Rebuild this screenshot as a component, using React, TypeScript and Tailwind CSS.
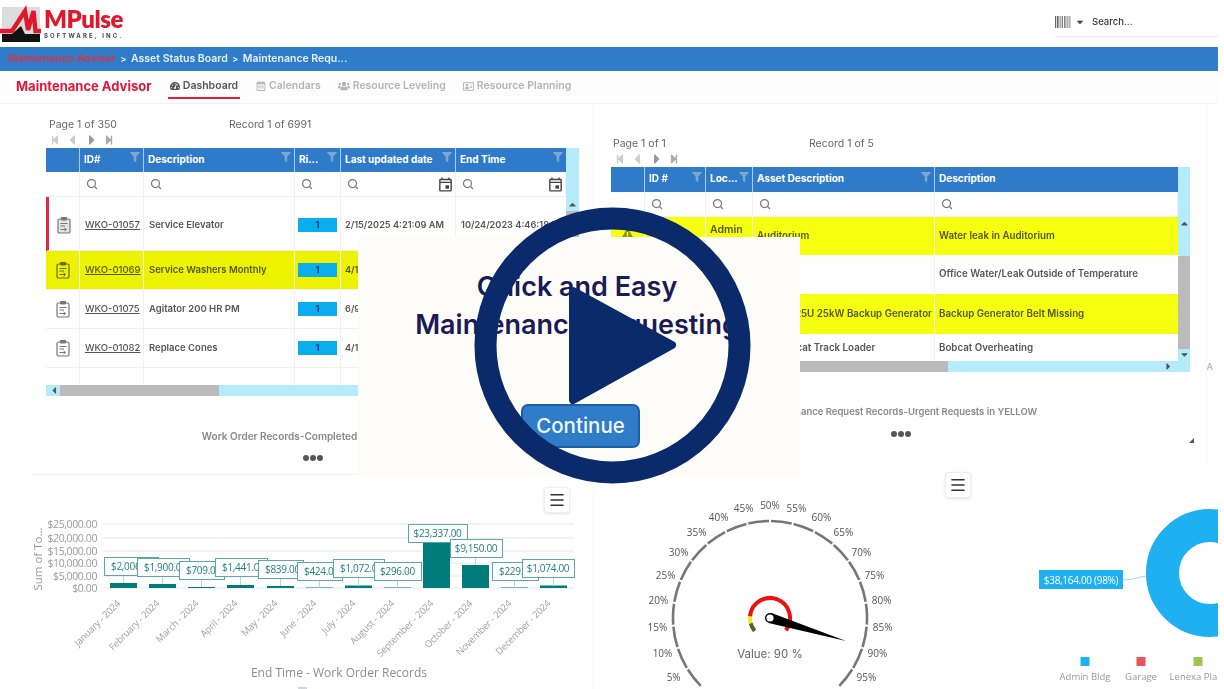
import React from "react";
import { Search, Menu } from "lucide-react";
import {
  FaFilter, FaStepBackward, FaStepForward, FaCaretLeft, FaCaretRight, FaCaretUp, FaCaretDown,
  FaTachometerAlt, FaRegCalendarAlt, FaUsers, FaRegAddressCard, FaExclamationTriangle,
} from "react-icons/fa";
import { MdOutlineEvent } from "react-icons/md";

const polar = (cx: number, cy: number, r: number, a: number) => {
  const t = (a * Math.PI) / 180;
  return [cx + r * Math.sin(t), cy - r * Math.cos(t)];
};
const arc = (cx: number, cy: number, r: number, a0: number, a1: number) => {
  const [x0, y0] = polar(cx, cy, r, a0);
  const [x1, y1] = polar(cx, cy, r, a1);
  return `M${x0} ${y0} A${r} ${r} 0 ${a1 - a0 > 180 ? 1 : 0} 1 ${x1} ${y1}`;
};

function Pager({ page, record, gap }: { page: string; record: string; gap: string }) {
  return (
    <>
      <div className={`flex h-[15px] items-center text-[10.5px] text-[#666] ${gap}`}>
        <span className="w-[180px]">{page}</span>
        <span>{record}</span>
      </div>
      <div className="flex h-[16px] items-center gap-[4px] pl-[4px] text-[10px] text-[#cccccc]">
        <FaStepBackward />
        <FaCaretLeft className="text-[16px]" />
        <FaCaretRight className="text-[16px] text-[#999]" />
        <FaStepForward className="text-[#aaa]" />
      </div>
    </>
  );
}

function Head({ label, filter = true }: { label: string; filter?: boolean }) {
  return (
    <div className="flex items-center justify-between border-r border-[#a9cff0] bg-[#2f7bc9] pl-[4px] pr-[3px] text-[10px] font-bold text-white last:border-r-0">
      <span className="pb-[2px] whitespace-nowrap">{label}</span>
      {filter && <FaFilter className="mb-[6px] shrink-0 text-[10px] text-[#7fa6cf]" />}
    </div>
  );
}

function FilterCell({ cal }: { cal?: boolean }) {
  return (
    <div className="flex items-center justify-between border-r border-b border-[#f1f1f1] pl-[6px] pr-[1px]">
      <Search size={12} strokeWidth={2.5} className="text-[#777]" />
      {cal && <MdOutlineEvent className="text-[17px] text-[#444]" />}
    </div>
  );
}

function ClipIcon({ hi, mark }: { hi?: boolean; mark?: boolean }) {
  const c = hi ? "#666a10" : "#777";
  return (
    <svg viewBox="0 0 14 18" className="h-[18px] w-[14px]">
      <rect x={1} y={3} width={12} height={14} rx={1.6} fill={mark ? "#e4e4e4" : "none"} stroke={c} strokeWidth={1.2} />
      <rect x={4} y={1} width={6} height={3.4} rx={0.8} fill={c} />
      <path d="M3.5 7.5H10.5M3.5 10H8M3.5 13.5H9M7.5 11.8L9.5 13.5L7.5 15.2" fill="none" stroke={c} strokeWidth={1} />
    </svg>
  );
}

type Row = { id: string; desc: string; date: string; end: string; hi?: boolean; mark?: boolean };
const leftRows: Row[] = [
  { id: "WKO-01057", desc: "Service Elevator", date: "2/15/2025 4:21:09 AM", end: "10/24/2023 4:46:18 PM", mark: true },
  { id: "WKO-01069", desc: "Service Washers Monthly", date: "4/1/2025 8:00:00 AM", end: "4/1/2025 8:00:00 AM", hi: true },
  { id: "WKO-01075", desc: "Agitator 200 HR PM", date: "6/9/2025 8:00:00 AM", end: "6/9/2025 8:00:00 AM" },
  { id: "WKO-01082", desc: "Replace Cones", date: "4/1/2025 8:00:00 AM", end: "4/1/2025 8:00:00 AM" },
];

function LeftTable() {
  const heights = ["h-[54px]", "h-[39px]", "h-[39px]", "h-[39px]"];
  return (
    <div className="w-[533px]">
      <div className="flex">
        <div className="w-[520px] overflow-hidden">
          <div className="grid h-[24px] grid-cols-[34px_64px_151px_46px_115px_110px]">
            <Head label="" filter={false} />
            <Head label="ID#" />
            <Head label="Description" />
            <Head label="Ri..." />
            <Head label="Last updated date" />
            <Head label="End Time" />
          </div>
          <div className="grid h-[25px] grid-cols-[34px_64px_151px_46px_115px_110px]">
            <div className="border-r border-b border-[#f1f1f1]" />
            <FilterCell />
            <FilterCell />
            <FilterCell />
            <FilterCell cal />
            <FilterCell cal />
          </div>
          {leftRows.map((r, i) => (
            <div
              key={r.id}
              className={`grid grid-cols-[34px_64px_151px_46px_115px_110px] text-[9.5px] font-semibold ${heights[i]} ${
                r.hi ? "bg-[#ecf200] text-[#55581a]" : "text-[#555]"
              }`}
            >
              <div className={`flex items-center justify-center border-r border-b border-[#f1f1f1] ${r.mark ? "border-l-[3px] border-l-[#e0283f] pt-[3px]" : ""}`}>
                <ClipIcon hi={r.hi} mark={r.mark} />
              </div>
              <div className={`flex items-center border-r border-b border-[#f1f1f1] pl-[5px] font-medium underline ${r.mark ? "pt-[3px]" : ""}`}>{r.id}</div>
              <div className={`flex items-center border-r border-b border-[#f1f1f1] pl-[5px] whitespace-nowrap ${r.mark ? "pt-[3px]" : ""}`}>{r.desc}</div>
              <div className={`flex items-center justify-center border-r border-b border-[#f1f1f1] ${r.mark ? "pt-[3px]" : ""}`}>
                <span className="flex h-[14px] w-[39px] items-center justify-center bg-[#0aaeef] text-[#12306a]">1</span>
              </div>
              <div className={`flex items-center border-r border-b border-[#f1f1f1] pl-[4px] text-[9.2px] whitespace-nowrap ${r.mark ? "pt-[3px]" : ""}`}>{r.date}</div>
              <div className={`flex items-center overflow-hidden border-b border-[#f1f1f1] pl-[5px] text-[9.2px] whitespace-nowrap ${r.mark ? "pt-[3px]" : ""}`}>{r.end}</div>
            </div>
          ))}
          <div className="grid h-[17px] grid-cols-[34px_64px_151px_46px_115px_110px]">
            <div className="border-r border-[#f1f1f1]" />
            <div className="border-r border-[#f1f1f1]" />
            <div className="border-r border-[#f1f1f1]" />
            <div className="border-r border-[#f1f1f1]" />
            <div className="border-r border-[#f1f1f1]" />
            <div />
          </div>
        </div>
        <div className="flex w-[13px] flex-col items-center bg-[#b5ecfb] pt-[51px] text-[#555]">
          <FaCaretUp className="text-[11px]" />
          <div className="mt-[1px] h-[150px] w-full bg-[#bbbbbb]" />
        </div>
      </div>
      <div className="flex h-[11px] items-center bg-[#b5ecfb]">
        <FaCaretLeft className="ml-[2px] w-[12px] text-[11px] text-[#555]" />
        <div className="h-full w-[159px] bg-[#bbbbbb]" />
      </div>
    </div>
  );
}

const RC = "grid-cols-[34px_61px_47px_182px_243px]";

function RightTable() {
  const rows = [
    { h: "h-[38px]", hi: true, id: "MRQ-00009", loc: "Admin", asset: "Auditorium", desc: "Water leak in Auditorium" },
    { h: "h-[39px]", hi: false, id: "MRQ-00011", loc: "Admin", asset: "", desc: "Office Water/Leak Outside of Temperature" },
    { h: "h-[40px]", hi: true, id: "MRQ-00014", loc: "Plant", asset: "Perkins 25U 25kW Backup Generator", desc: "Backup Generator Belt Missing" },
    { h: "h-[27px]", hi: false, id: "MRQ-00016", loc: "Yard", asset: "T65 Bobcat Track Loader", desc: "Bobcat Overheating" },
  ];
  return (
    <div className="w-[579px]">
      <div className="flex">
        <div className="w-[567px]">
          <div className={`grid h-[25px] ${RC}`}>
            <Head label="" filter={false} />
            <Head label="ID #" />
            <Head label="Loc..." />
            <Head label="Asset Description" />
            <Head label="Description" filter={false} />
          </div>
          <div className={`grid h-[25px] ${RC}`}>
            <div className="border-r border-b border-[#f1f1f1]" />
            <FilterCell />
            <FilterCell />
            <FilterCell />
            <FilterCell />
          </div>
          {rows.map((r, i) => (
            <div key={r.id} className={`grid ${RC} ${r.h} text-[9.75px] font-semibold ${r.hi ? "bg-[#f5ff0f] text-[#55581a]" : "text-[#555]"}`}>
              <div className="flex items-center justify-center border-r border-[#f1f1f1] pb-[5px]">
                {r.hi && <FaExclamationTriangle className="text-[11px] text-[#8f9220]" />}
              </div>
              <div className="flex items-center border-r border-[#f1f1f1] pl-[5px] font-medium underline">{r.id}</div>
              <div className={`flex border-r border-[#f1f1f1] pl-[4px] ${i === 0 ? "items-start pt-[5px] text-[10.5px]" : "items-center"}`}>{r.loc}</div>
              <div className="flex items-center overflow-hidden border-r border-[#f1f1f1] pl-[4px] whitespace-nowrap">{r.asset}</div>
              <div className="flex items-center pl-[4px] whitespace-nowrap">{r.desc}</div>
            </div>
          ))}
        </div>
        <div className="flex w-[12px] flex-col items-center bg-[#b5ecfb] pt-[51px] text-[#555]">
          <FaCaretUp className="text-[11px]" />
          <div className="mt-[27px] h-[93px] w-full bg-[#bbbbbb]" />
          <FaCaretDown className="text-[11px]" />
        </div>
      </div>
      <div className="flex h-[11px] items-center bg-[#b5ecfb]">
        <div className="h-full w-[337px] bg-[#bbbbbb]" />
        <FaCaretRight className="ml-auto mr-[16px] text-[11px] text-[#555]" />
      </div>
    </div>
  );
}

function Dots() {
  return (
    <div className="mt-[12px] flex h-[6px] justify-center gap-[1px]">
      <span className="h-[6px] w-[6px] rounded-full bg-[#555]" />
      <span className="h-[6px] w-[6px] rounded-full bg-[#555]" />
      <span className="h-[6px] w-[6px] rounded-full bg-[#555]" />
    </div>
  );
}

const MENU_CLASS =
  "absolute flex h-[26px] w-[26px] items-center justify-center rounded-[3px] border border-[#eeeeee] bg-white text-[#333] shadow-sm";

const bars: [number, number][] = [
  [110, 583], [149, 584], [188, 587], [227, 585], [267, 586], [306, 587.5],
  [345, 585.5], [384, 587.5], [423, 542], [462, 565], [501, 587.5], [540, 585.5],
];
const tags: [number, number, number, string][] = [
  [104, 54, 557, "$2,006.00"], [137, 52, 558, "$1,900.00"], [179, 45, 561, "$709.00"], [215, 52, 558, "$1,441.00"],
  [258, 45, 560, "$839.00"], [297, 45, 562, "$424.00"], [333, 51, 559, "$1,072.00"], [374, 47, 562, "$296.00"],
  [408, 59, 524, "$23,337.00"], [450, 52, 539, "$9,150.00"], [492, 46, 562, "$229.00"], [522, 52, 559, "$1,074.00"],
];
const months = ["January", "February", "March", "April", "May", "June", "July", "August", "September", "October", "November", "December"];
const yTicks: [string, number][] = [["$25,000.00", 524], ["$20,000.00", 538], ["$15,000.00", 551], ["$10,000.00", 563], ["$5,000.00", 576], ["$0.00", 588]];

function BarChart() {
  return (
    <svg viewBox="0 475 594 214" className="block h-[214px] w-[594px] font-['Open_Sans',sans-serif]">
      {yTicks.map(([l, y]) => (
        <g key={l}>
          <line x1={103} x2={574} y1={y} y2={y} stroke="#e6e6e6" />
          <text x={97} y={y + 4} textAnchor="end" fontSize={10.5} fill="#9a9a9a" letterSpacing={-0.4}>{l}</text>
        </g>
      ))}
      <text transform="translate(42 559) rotate(-90)" textAnchor="middle" fontSize={11.5} fill="#999">Sum of To...</text>
      {bars.map(([x, top], i) => (
        <g key={months[i]}>
          <rect x={x} y={top} width={27} height={588 - top} fill="#007c7a" />
          <line x1={x + 13.5} x2={x + 13.5} y1={tags[i][2] + 18} y2={top} stroke="#b8d8d6" />
          <text transform={`translate(${x + 11} 604) rotate(-45)`} textAnchor="end" fontSize={9.5} letterSpacing={-0.2} fill="#a0a0a0">{months[i]} - 2024</text>
        </g>
      ))}
      {tags.map(([x, w, y, t], i) => {
        const mid = i === 11 || i === 8 || i === 9 || i === 7;
        return (
          <g key={t}>
            <rect x={x + 0.5} y={y + 0.5} width={w} height={18} fill="#fff" stroke="#5aa9a7" strokeWidth={1} />
            <text x={x + (mid ? w / 2 : 7)} y={y + 13} textAnchor={mid ? "middle" : "start"} fontSize={10} fill="#1d7f80" letterSpacing={-0.3}>{t}</text>
          </g>
        );
      })}
      <text x={339} y={677} textAnchor="middle" fontSize={12} fill="#8c8c8c">End Time - Work Order Records</text>
      <rect x={298} y={687} width={9} height={2} fill="#cfd8dc" />
    </svg>
  );
}

function Gauge() {
  const cx = 770, cy = 618;
  const steps = Array.from({ length: 20 }, (_, i) => i);
  const labels = Array.from({ length: 19 }, (_, i) => (i + 1) * 5);
  const [tx, ty] = [846, 641];
  return (
    <svg viewBox="594 464 396 225" className="block h-[225px] w-[396px] font-['Open_Sans',sans-serif]">
      {steps.map((i) => (
        <path key={i} d={arc(cx, cy, 97, -135 + i * 13.5 + 0.6, -135 + (i + 1) * 13.5 - 0.6)} fill="none" stroke="#777" strokeWidth={2.6} />
      ))}
      {labels.map((p) => {
        const [x, y] = polar(cx, cy, 113, -135 + p * 2.7);
        return <text key={p} x={x} y={y + 4} textAnchor="middle" fontSize={10} fill="#555">{p}%</text>;
      })}
      <path d={arc(cx, cy, 20, -130, -105)} fill="none" stroke="#5a5f2a" strokeWidth={4} />
      <path d={arc(cx, cy, 20, -105, -85)} fill="none" stroke="#e8ec20" strokeWidth={4} />
      <path d={arc(cx, cy, 20, -85, 128)} fill="none" stroke="#ee1111" strokeWidth={4} />
      <polygon points={`${cx + 1.5} ${cy - 5} ${tx} ${ty} ${cx - 1.5} ${cy + 5}`} fill="#000" />
      <circle cx={cx} cy={cy} r={4.3} fill="#fff" stroke="#000" strokeWidth={1.4} />
      <text x={cx} y={658} textAnchor="middle" fontSize={11.5} fill="#666" className="font-['Inter',sans-serif]">Value: 90 %</text>
    </svg>
  );
}

function Donut() {
  return (
    <svg viewBox="990 464 228 225" className="block h-[225px] w-[228px] font-['Open_Sans',sans-serif]">
      <circle cx={1210} cy={573} r={47.5} fill="none" stroke="#1fb0f2" strokeWidth={33} />
      <path d="M1123 580 C1132 580 1138 577 1146 576" fill="none" stroke="#9adcf7" />
      <rect x={1039} y={570} width={84} height={19} fill="#1fb0f2" />
      <text x={1081} y={584} textAnchor="middle" fontSize={10} fill="#fff" letterSpacing={-0.3}>$38,164.00 (98%)</text>
      {[[1085, "#1fb0f2", "Admin Bldg"], [1141, "#e8555b", "Garage"], [1198, "#9cc653", "Lenexa Plant"]].map(([x, c, t]) => (
        <g key={t as string}>
          <rect x={(x as number) - 4.5} y={657} width={9} height={9} fill={c as string} />
          <text x={x as number} y={680} textAnchor="middle" fontSize={9.5} fill="#999">{t as string}</text>
        </g>
      ))}
    </svg>
  );
}

function Logo() {
  return (
    <svg viewBox="0 0 41 42" className="h-[42px] w-[41px] shrink-0">
      <rect x={2} y={6} width={38} height={35} fill="#dcdcdc" />
      <path d="M2 33 H12 L21 25 L25 33 H40 V41 H2 Z" fill="#111" />
      <path d="M0 30 H12 L25 10 L28 29 L33.5 10 L35.5 30 H41" fill="none" stroke="#e0182d" strokeWidth={4.4} strokeLinejoin="miter" />
    </svg>
  );
}

export default function App() {
  return (
    <div className="relative h-[689px] w-[1224px] overflow-hidden bg-white font-['Inter','Noto_Sans',sans-serif]">
      <div className="w-[1218px] blur-[0.4px]">
        <header className="flex h-[47px] items-start">
          <div className="flex items-start pt-[1px]">
            <Logo />
            <div className="ml-[3px] flex flex-col">
              <span className="mt-[4px] text-[24px] leading-[28px] font-extrabold tracking-[-0.5px] text-[#e0182d] font-['Lato',sans-serif]">MPulse</span>
              <span className="text-[6px] leading-[6px] font-bold tracking-[2.1px] whitespace-nowrap text-[#444]">SOFTWARE, INC.</span>
            </div>
          </div>
          <div className="ml-auto mt-[15px] w-[163px] border-b border-[#fbe3e5] pb-[7px]">
            <div className="flex h-[14px] items-center text-[#555]">
              <svg viewBox="0 0 16 12" className="h-[12px] w-[16px]">
                {[0, 2, 3.5, 5.5, 7, 9, 10.5, 12.5, 14.5].map((x) => (
                  <rect key={x} x={x} y={0} width={x % 2 === 0 ? 1.2 : 0.8} height={12} fill="#666" />
                ))}
              </svg>
              <FaCaretDown className="ml-[4px] text-[10px] text-[#444]" />
              <span className="ml-[7px] text-[9.5px] font-medium text-[#333]">Search...</span>
            </div>
          </div>
        </header>

        <nav className="flex h-[24px] items-center gap-[4.5px] bg-[#2f7cc8] pl-[8px] text-[10.5px] font-semibold text-[#e6f0fa]">
          <span className="text-[#d8324a]">Maintenance Advisor</span>
          <span className="text-[9px]">&gt;</span>
          <span>Asset Status Board</span>
          <span className="text-[9px]">&gt;</span>
          <span>Maintenance Requ...</span>
        </nav>

        <div className="flex h-[33px] items-center border-b border-[#f3f3f3] bg-[#fdfdfe] pl-[16px]">
          <span className="w-[152px] text-[13px] font-bold whitespace-nowrap text-[#e0173a]">Maintenance Advisor</span>
          <div className="flex h-full items-start text-[10.5px] font-semibold text-[#b4b4b4]">
            <div className="flex h-[28px] w-[72px] items-center justify-center gap-[3px] border-b-2 border-[#d92438] pt-[3px] text-[#555]">
              <FaTachometerAlt className="text-[10px]" /> Dashboard
            </div>
            <div className="ml-[16px] flex h-[28px] items-center gap-[3px] pb-[1px] pt-[3px]">
              <FaRegCalendarAlt className="text-[10px]" /> Calendars
            </div>
            <div className="ml-[17px] flex h-[28px] items-center gap-[3px] pb-[1px] pt-[3px]">
              <FaUsers className="text-[12px]" /> Resource Leveling
            </div>
            <div className="ml-[17px] flex h-[28px] items-center gap-[3px] pb-[1px] pt-[3px]">
              <FaRegAddressCard className="text-[11px]" /> Resource Planning
            </div>
          </div>
        </div>

        <div className="flex h-[585px]">
          <div className="flex w-[594px] flex-col border-r border-[#f6f6f6]">
            <section className="h-[371px] pl-[46px] pt-[13px]">
              <Pager page="Page 1 of 350" record="Record 1 of 6991" gap="pl-[3px]" />
              <LeftTable />
              <div className="w-[533px]">
                <div className="mt-[33px] h-[14px] text-center text-[10px] leading-[14px] font-semibold whitespace-nowrap text-[#888]">
                  Work Order Records-Completed For This Year
                </div>
                <Dots />
              </div>
            </section>
            <section className="relative ml-[32px] w-[562px] border-t border-[#f2f2f2]">
              <div className="-ml-[32px]">
                <BarChart />
              </div>
              <button className={`${MENU_CLASS} left-[512px] top-[12px]`}>
                <Menu size={18} strokeWidth={2.2} />
              </button>
            </section>
          </div>

          <div className="flex flex-col">
            <section className="relative h-[360px] w-[613px] border-r border-[#f6f6f6] pl-[17px] pt-[32px]">
              <Pager page="Page 1 of 1" record="Record 1 of 5" gap="pl-[2px] gap-[16px]" />
              <RightTable />
              <div className="w-[579px]">
                <div className="mt-[33px] h-[14px] text-center text-[9.5px] leading-[14px] font-semibold whitespace-nowrap text-[#888]">
                  Maintenance Request Records-Urgent Requests in YELLOW
                </div>
                <Dots />
              </div>
              <span className="absolute right-[-7px] top-[256px] text-[9px] font-semibold text-[#bbb]">A</span>
              <span className="absolute right-[12px] top-[334px] h-0 w-0 border-b-[5px] border-l-[5px] border-b-[#555] border-l-transparent" />
            </section>
            <div className="relative flex">
              <Gauge />
              <Donut />
              <button className={`${MENU_CLASS} left-[351px] top-[8px]`}>
                <Menu size={18} strokeWidth={2.2} />
              </button>
            </div>
          </div>
        </div>
      </div>

      <div className="absolute left-[358px] top-[237px] flex h-[238px] w-[442px] flex-col items-center bg-[#fdfcf8] pt-[31px]">
        <h1 className="pr-[4px] text-center text-[27px] leading-[38px] font-semibold whitespace-nowrap text-[#1a1a55]">
          Quick and Easy
          <br />
          Maintenance Requesting
        </h1>
        <button className="ml-[3px] mt-[60px] flex h-[44px] w-[119px] items-center justify-center rounded-[7px] border-2 border-[#1c5fa8] bg-[#2f7cc8] text-[20.5px] font-medium text-[#f2f7fc]">
          Continue
        </button>
      </div>

      <svg viewBox="0 0 277 277" className="absolute left-[474px] top-[207px] h-[277px] w-[277px]">
        <circle cx={138.5} cy={138.5} r={127} fill="none" stroke="#0a2a6b" strokeWidth={22} />
        <path d="M99 84 L198 138 L99 193 Z" fill="#0a2a6b" stroke="#0a2a6b" strokeWidth={8} strokeLinejoin="round" />
      </svg>
    </div>
  );
}
